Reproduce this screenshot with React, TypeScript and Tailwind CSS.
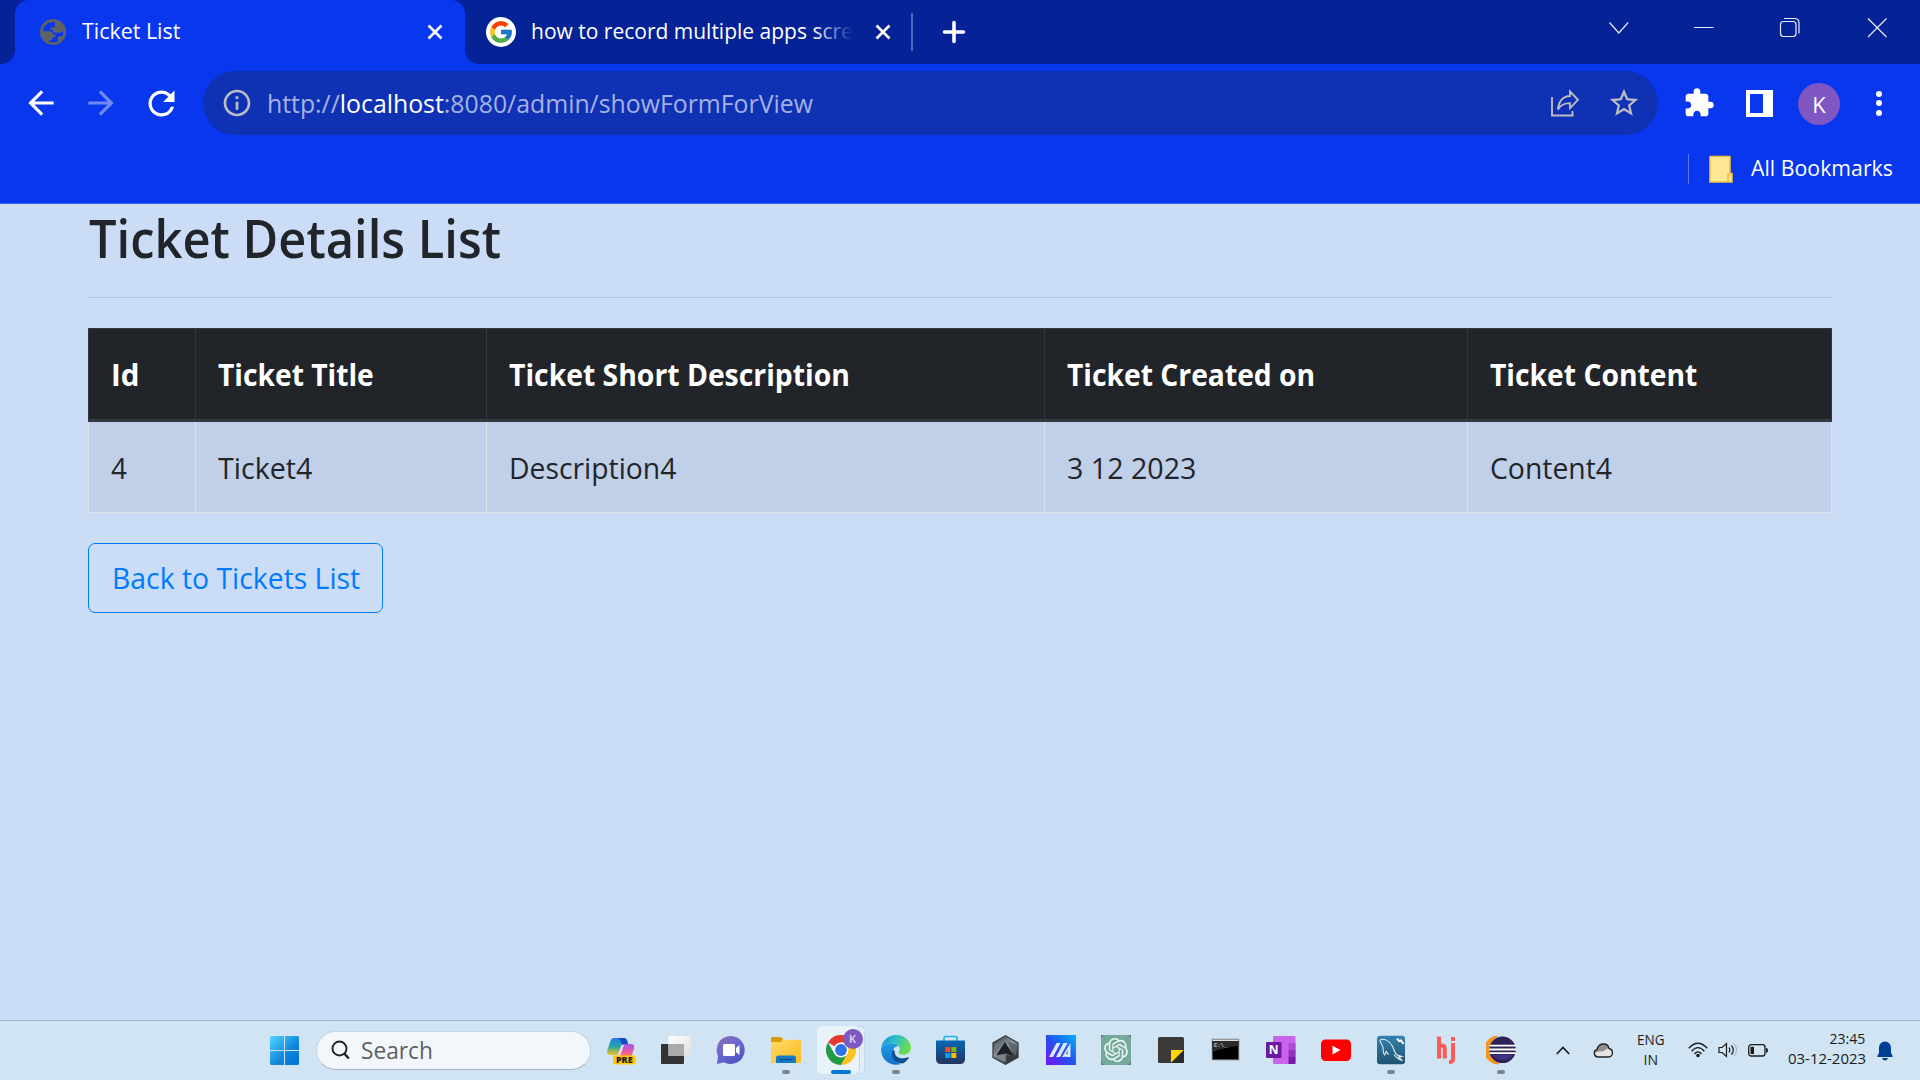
import React, { useLayoutEffect, useRef, useState } from "react";
import { MdArrowBack, MdArrowForward, MdRefresh, MdInfoOutline, MdStarBorder, MdExtension } from "react-icons/md";
import { FcGoogle } from "react-icons/fc";
import { SiOpenai } from "react-icons/si";

/** One line of text, condensed or stretched to fill the width its class gives. */
function Fit({ className, children }: { className: string; children: React.ReactNode }) {
  const outer = useRef<HTMLDivElement>(null);
  const inner = useRef<HTMLSpanElement>(null);
  const [scale, setScale] = useState(1);
  useLayoutEffect(() => {
    if (outer.current && inner.current) setScale(outer.current.clientWidth / inner.current.offsetWidth);
  }, []);
  return (
    <div ref={outer} className={"shrink-0 whitespace-nowrap " + className}>
      <span ref={inner} className="inline-block origin-left" style={{ transform: `scaleX(${scale})` }}>
        {children}
      </span>
    </div>
  );
}

function Close({ className }: { className: string }) {
  return (
    <svg viewBox="0 0 16 16" className={"h-4 w-4 shrink-0 " + className} stroke="white" strokeWidth="2.6" fill="none">
      <path d="M1.5 1.5l13 13M14.5 1.5l-13 13" />
    </svg>
  );
}

function TabStrip() {
  return (
    <div className="flex h-16 bg-[#0937ee]">
      <div className="w-[15px] rounded-br-[14px] bg-[#052296]" />
      <div className="w-[450px] bg-gradient-to-b from-[#052296] from-50% to-[#0937ee] to-50%">
        <div className="flex h-16 items-center rounded-t-[14px] bg-[#0937ee] pl-[25px]">
          <svg viewBox="0 0 26 26" className="h-[26px] w-[26px] shrink-0">
            <circle cx="13" cy="13" r="13" fill="#5f6368" />
            <path
              d="M15 3.200C9 2.200 3.500 6 2.700 12.200h6.800q3.600 0 3.600 3.300h2.300v3H12v2.500H9.500v1.800C13 24 16 23.500 18 22.300v-3.500q0-1.500 1.800-1.500h2.400q1.300-2.300 1.100-5.200-1.500 1.700-4 1.700h-3.500q-3-.2-3-3h-2.300V8.500h2.300q2.200 0 2.200-2.600z"
              fill="#0937ee"
            />
          </svg>
          <Fit className="mb-[3px] ml-[16px] w-[98px] font-['Open_Sans'] text-[22.5px] leading-8 text-white">Ticket List</Fit>
          <Close className="ml-[247px]" />
        </div>
      </div>
      <div className="flex flex-1 items-center rounded-bl-[14px] bg-[#052296] pl-[21px]">
        <div className="flex h-[30px] w-[30px] shrink-0 items-center justify-center rounded-full bg-white">
          <FcGoogle size={26} />
        </div>
        <div className="relative mb-[3px] ml-[15px] w-[322px] overflow-hidden">
          <Fit className="w-[322px] font-['Open_Sans'] text-[22.5px] leading-8 text-white">how to record multiple apps scre</Fit>
          <div className="absolute inset-y-0 right-0 w-10 bg-gradient-to-r from-[#05229600] to-[#052296]" />
        </div>
        <Close className="ml-[22px]" />
        <div className="ml-[20px] h-[38px] w-0.5 bg-[#5468b8]" />
        <svg viewBox="0 0 24 24" className="ml-[29px] h-6 w-6 shrink-0" stroke="white" strokeWidth="3.6" strokeLinecap="round">
          <path d="M12 2.500v19M2.500 12h19" />
        </svg>
        <svg viewBox="0 0 280 22" className="mb-[9px] ml-auto mr-[33px] h-[22px] w-[280px] shrink-0" fill="none" stroke="#e8ecff" strokeWidth="1.2">
          <path d="M2.500 5.500l9.300 10.500L21.200 5.500M87 10.500h19.500M261 1.500l18.500 18.500M279.500 1.500L261 20" />
          <rect x="173.500" y="4.500" width="15.500" height="15" rx="3" />
          <path d="M177 1.500h10.500q4.500 0 4.500 4.500v10.500" />
        </svg>
      </div>
    </div>
  );
}

function Toolbar() {
  return (
    <div className="flex h-[78px] items-center bg-[#0937ee] text-white">
      <MdArrowBack size={38} className="ml-[22px] shrink-0" />
      <MdArrowForward size={38} className="ml-[22px] shrink-0 text-[#7089f5]" />
      <MdRefresh size={39} className="ml-[22px] shrink-0" />
      <div className="ml-[22px] flex h-16 w-[1455px] shrink-0 items-center rounded-full bg-[#0f31b4] pl-[18px] text-[#bcbcc4]">
        <MdInfoOutline size={32} className="shrink-0" />
        <Fit className="mb-px ml-[14px] w-[546px] font-['Open_Sans'] text-[25px] leading-8 text-[#a5b1e3]">
          http://<span className="text-white">localhost</span>:8080/admin/showFormForView
        </Fit>
        <svg viewBox="0 0 30 28" className="ml-[737px] h-7 w-[30px] shrink-0" fill="none" stroke="currentColor" strokeWidth="1.9">
          <path d="M2 8v18.500h20.500V22M20 2.500l8 8.300-8 8.300v-5C14.500 14 10.500 16 8 20.500c.3-7.500 4.500-13.300 12-13.500z" />
        </svg>
        <MdStarBorder size={34} className="ml-[27px] shrink-0" />
      </div>
      <MdExtension size={32} className="ml-[25px] shrink-0" />
      <div className="ml-[31px] flex h-[27px] w-[27px] shrink-0 justify-start bg-white p-1">
        <div className="h-[19px] w-[13px] bg-[#0937ee]" />
      </div>
      <div className="ml-[25px] mt-0.5 flex h-[42px] w-[42px] shrink-0 items-center justify-center rounded-full bg-[#7e57c2] font-['Open_Sans'] text-[22px]">
        K
      </div>
      <div className="ml-[36px] flex flex-col gap-[3.5px]">
        <div className="h-1.5 w-1.5 rounded-full bg-white" />
        <div className="h-1.5 w-1.5 rounded-full bg-white" />
        <div className="h-1.5 w-1.5 rounded-full bg-white" />
      </div>
    </div>
  );
}

function Bookmarks() {
  return (
    <div className="flex h-[62px] items-center justify-end border-b border-[#3a5ff1] bg-[#0937ee] pb-[7px] pr-[27px]">
      <div className="h-[30px] w-px bg-[#5b79f4]" />
      <svg viewBox="0 0 24 28" className="ml-[20px] h-7 w-6">
        <path d="M1 1.500h20v17h2v8.500H1z" fill="#ffe793" stroke="#f4c63c" strokeWidth="1.5" />
        <path d="M19 27v-7.500h2.500" stroke="#e9b727" strokeWidth="1.3" fill="none" />
      </svg>
      <Fit className="mb-0.5 ml-[18px] w-[142px] font-['Open_Sans'] text-[22.5px] leading-8 text-white">All Bookmarks</Fit>
    </div>
  );
}

const columns = [
  { head: "Id", value: "4", col: "w-[107px]", hw: "w-[28px]", vw: "w-[16px]" },
  { head: "Ticket Title", value: "Ticket4", col: "w-[291px]", hw: "w-[156px]", vw: "w-[94px]" },
  { head: "Ticket Short Description", value: "Description4", col: "w-[558px]", hw: "w-[341px]", vw: "w-[167px]" },
  { head: "Ticket Created on", value: "3 12 2023", col: "w-[423px]", hw: "w-[248px]", vw: "w-[129px]" },
  { head: "Ticket Content", value: "Content4", col: "w-[365px]", hw: "w-[207px]", vw: "w-[122px]" },
];

function Page() {
  return (
    <div className="h-[816px] bg-[#cbdcf6] px-[88px] pt-[3px] font-['Open_Sans'] text-[#212529]">
      <Fit className="ml-px h-[90px] w-[412px] text-[52.5px] font-semibold leading-[62px]">Ticket Details List</Fit>
      <div className="mb-[30px] h-px bg-[#b2c3e1]" />
      <div className="w-[1744px]">
        <div className="flex h-[94px] border border-b-[3px] border-[#32383e] bg-[#212529] text-white">
          {columns.map((c) => (
            <div key={c.head} className={"flex shrink-0 items-center border-r border-[#32383e] pl-[22px] pt-0.5 last:shrink last:border-r-0 " + c.col}>
              <Fit className={"text-[29.5px] font-bold leading-[44px] " + c.hw}>{c.head}</Fit>
            </div>
          ))}
        </div>
        <div className="flex h-[91px] border border-t-0 border-[#dee2e6] bg-[#c1d0e9]">
          {columns.map((c) => (
            <div key={c.head} className={"flex shrink-0 items-center border-r border-[#dee2e6] pl-[22px] pt-0.5 last:shrink last:border-r-0 " + c.col}>
              <Fit className={"text-[29.5px] leading-[44px] " + c.vw}>{c.value}</Fit>
            </div>
          ))}
        </div>
      </div>
      <button className="mt-[30px] flex h-[70px] w-[295px] items-center rounded-[7px] border border-[#007bff] pl-[23px] text-left text-[#007bff]">
        <Fit className="w-[248px] text-[29.5px] leading-[44px]">Back to Tickets List</Fit>
      </button>
    </div>
  );
}

function Slot({ children, running }: { children: React.ReactNode; running?: boolean }) {
  return (
    <div className="relative flex h-full w-[55px] shrink-0 items-center justify-center pb-px">
      {children}
      {running && <div className="absolute bottom-[6px] h-1 w-2 rounded-full bg-[#7b868f]" />}
    </div>
  );
}

function AppIcons() {
  const s = "h-[30px] w-[30px]";
  return (
    <>
      <Slot>
        <svg viewBox="0 0 30 30" className={s}>
          <defs>
            <linearGradient id="cpA" x2="0" y2="1"><stop stopColor="#1b7ce0" /><stop offset=".5" stopColor="#2aa5a8" /><stop offset="1" stopColor="#f2c31b" /></linearGradient>
            <linearGradient id="cpB" x2="0" y2="1"><stop stopColor="#a35ae8" /><stop offset=".6" stopColor="#e75aa5" /><stop offset="1" stopColor="#f68b45" /></linearGradient>
          </defs>
          <path d="M8 3h11l-6 17H5c-3 0-4.500-2-3.600-5L4.500 6Q5.500 3 8 3z" fill="url(#cpA)" />
          <path d="M12 3h6q2.500 0 3.300 3l.9 3.500h-6L14.500 5z" fill="#1746c4" />
          <path d="M17 9h8q4 0 3 4l-2.500 9H12z" fill="url(#cpB)" />
          <path d="M15.500 10h2.500l-4 11h-2.500z" fill="#e9dcf5" />
          <rect x="7" y="20.5" width="22.5" height="9" rx="2" fill="#ffc60a" />
          <text x="18.300" y="28.300" textAnchor="middle" fontSize="9" fontWeight="800" fontFamily="Open Sans" fill="#222">PRE</text>
        </svg>
      </Slot>
      <Slot>
        <svg viewBox="0 0 30 30" className={s}>
          <defs><linearGradient id="tv" x2="1" y2="1"><stop stopColor="#fff" /><stop offset="1" stopColor="#dedede" /></linearGradient></defs>
          <rect y="9" width="23" height="20" rx="1" fill="#333" />
          <rect x="7.500" y="1" width="22.500" height="20" rx="1" fill="url(#tv)" />
          <path d="M7.500 9H23v12H7.500z" fill="#aaa" />
        </svg>
      </Slot>
      <Slot>
        <svg viewBox="0 0 30 30" className={s}>
          <defs><linearGradient id="ch" x1="0" x2=".7" y2="1"><stop stopColor="#8a6eae" /><stop offset=".5" stopColor="#6d68cf" /><stop offset="1" stopColor="#4d52c0" /></linearGradient></defs>
          <path d="M15 1a14 14 0 1 1-7 26.300L1 29l1-8A14 14 0 0 1 15 1z" fill="url(#ch)" />
          <rect x="7" y="9" width="12" height="12" rx="1.500" fill="#fff" />
          <path d="M20 13l3.500-3v10L20 17z" fill="#fff" />
        </svg>
      </Slot>
      <Slot running>
        <svg viewBox="0 0 30 30" className={s}>
          <defs><linearGradient id="fo" x2="1" y2="1"><stop stopColor="#ffda67" /><stop offset="1" stopColor="#fcbc22" /></linearGradient></defs>
          <path d="M0 3q0-1 1-1h9l3 3.500-3 3H0z" fill="#dc9b06" />
          <path d="M0 7h9.500l2.500-2.300h17q1 0 1 1V27q0 1-1 1H1q-1 0-1-1z" fill="url(#fo)" />
          <path d="M5 28v-5q0-2.500 2.500-2.500h15Q25 20.500 25 23v5z" fill="#1479c9" />
          <path d="M8.500 24.500h13" stroke="#0b4c88" strokeWidth="1.2" />
        </svg>
      </Slot>
      <div className="relative flex h-full w-[55px] shrink-0 items-center justify-center">
        <div className="absolute left-[3px] top-[5px] h-[48px] w-[48px] rounded-[5px] border border-[#c4dae9] bg-[#e2eff8]" />
        <div className="absolute left-[3px] top-[5px] h-[48px] w-[43px] rounded-[5px] border-r border-[#c4d7e6] bg-[#e9f3fa]" />
        <svg viewBox="0 0 30 30" className="relative mb-px h-[30px] w-[30px]">
          <path d="M15 15L2 7.500A15 15 0 0 1 28 7.500H15z" fill="#e33b2e" />
          <path d="M15 15L8.500 18.800 2 7.500A15 15 0 0 0 15 30l6.500-11.200z" fill="#249a48" />
          <path d="M15 7.500h13A15 15 0 0 1 15 30l6.500-11.200z" fill="#fcc31e" />
          <circle cx="15" cy="15" r="7.500" fill="#fff" />
          <circle cx="15" cy="15" r="5.900" fill="#2e74e6" />
        </svg>
        <div className="absolute left-[29px] top-[8px] flex h-[20px] w-[20px] items-center justify-center rounded-full bg-[#7e57c2] font-['Open_Sans'] text-[11px] font-semibold text-[#e4d9f3]">
          K
        </div>
        <div className="absolute bottom-[6px] left-[17px] h-1 w-5 rounded-full bg-[#0078d4]" />
      </div>
      <Slot running>
        <svg viewBox="0 0 30 30" className={s}>
          <defs>
            <linearGradient id="ed" x2="1" y2=".4"><stop stopColor="#1787d1" /><stop offset=".5" stopColor="#2fc0c8" /><stop offset="1" stopColor="#69dd4e" /></linearGradient>
            <linearGradient id="eb" x2="0" y2="1"><stop stopColor="#1d9ce4" /><stop offset="1" stopColor="#1272cf" /></linearGradient>
          </defs>
          <path d="M.3 12C1.700 5 7.500 0 15 0c9 0 15 6.500 15 12.500 0 5-4 7.300-7.500 7.300-3.300 0-5-1.200-5-2.200 0-.8 1.300-1.500 1.300-3.600 0-3-3-5.700-7.300-5.700C6 8.300 2 10 .3 12z" fill="url(#ed)" />
          <path d="M.2 13C2 9.500 6.500 8.300 11 8.300c3 0 5.600 1.200 6.800 3-3.500-.3-6.300 2.500-6.300 6.700 0 5.500 4.200 9.700 8.800 11C9 32.500-1 24 .2 13z" fill="url(#eb)" />
          <path d="M12 14.500c-3 5 0 14 9.500 14 3-1.300 5-3.300 6.300-5.500.3-.7-.2-1-.8-.7-6 2.500-14 .5-13.300-6.300z" fill="#114f93" />
        </svg>
      </Slot>
      <Slot>
        <svg viewBox="0 0 30 30" className={s}>
          <defs><linearGradient id="st" x2="0" y2="1"><stop stopColor="#0866b4" /><stop offset="1" stopColor="#23355f" /></linearGradient></defs>
          <path d="M8 6V3q0-1.500 1.500-1.500h10Q21 1.500 21 3v3" fill="none" stroke="#21b3ee" strokeWidth="1.7" />
          <path d="M0 5.500h29V24q0 5-5 5H5q-5 0-5-5z" fill="url(#st)" />
          <path d="M9.300 12h5v5h-5z" fill="#f25022" /><path d="M15.300 12h5v5h-5z" fill="#7fba00" />
          <path d="M9.300 18h5v5h-5z" fill="#00a4ef" /><path d="M15.300 18h5v5h-5z" fill="#ffb900" />
        </svg>
      </Slot>
      <Slot>
        <svg viewBox="0 0 30 30" className={s}>
          <defs><linearGradient id="hx" x2=".7" y2="1"><stop stopColor="#30363b" /><stop offset=".5" stopColor="#8e969c" /><stop offset="1" stopColor="#202428" /></linearGradient></defs>
          <path d="M14.500 .8L27 8v14.300l-12.500 7L2 22.300V8z" fill="url(#hx)" stroke="#3a4045" strokeWidth="1.3" />
          <path d="M14 7l8.500 14L14.500 18.500 5 20.500z" fill="#1d2124" />
          <path d="M13 5.500L4 19V9.500z" fill="#6d767c" />
          <path d="M4 21.500l10.500-2v8z" fill="#7b8389" /><path d="M16 6l9 4v11z" fill="#5e666c" />
          <path d="M15.500 20l8 2.500-8 4.800z" fill="#34393e" />
        </svg>
      </Slot>
      <Slot>
        <svg viewBox="0 0 30 30" className={s}>
          <defs><linearGradient id="ma" x1="1" x2="0" y2="1"><stop stopColor="#00b4ff" /><stop offset=".5" stopColor="#2352ee" /><stop offset="1" stopColor="#7713f5" /></linearGradient></defs>
          <path d="M0 0h30v30H0z" fill="url(#ma)" />
          <path d="M3 22l7.500-14h4L7 22zM10 22l7.500-14h4L14 22z" fill="#dfe7ff" />
          <path d="M16 22l8.500-14V22h-2.800v-6.500L18.500 22z" fill="#dfe7ff" />
          <circle cx="20.500" cy="20.500" r="1.500" fill="#fff" />
        </svg>
      </Slot>
      <Slot>
        <div className="flex h-[30px] w-[30px] items-center justify-center bg-[#6b7f7a]">
          <div className="flex h-[30px] w-[30px] items-center justify-center rounded-[5px] bg-[#74aa9c] text-[#eef6f3]">
            <SiOpenai size={24} />
          </div>
        </div>
      </Slot>
      <Slot>
        <svg viewBox="0 0 30 30" className={s}>
          <rect x="2" y="2" width="26" height="26" rx="1.500" fill="#3b3a39" />
          <path d="M15 15h13L15 28z" fill="#ffd500" /><path d="M28 15v11.500q0 1.500-1.500 1.500H15z" fill="#2b2a29" />
        </svg>
      </Slot>
      <Slot>
        <svg viewBox="0 0 30 30" className={s}>
          <rect x="1" y="4" width="27" height="21" fill="#000" stroke="#a6a9ab" />
          <path d="M1.500 4.500h26V6h-26z" fill="#ddd" /><path d="M1.500 6h26v5Q14 12 1.500 17z" fill="#2c2c2c" />
          <text x="3" y="11.500" fontSize="5.500" fontFamily="Liberation Mono" fontWeight="700" fill="#ddd">C:\_</text>
        </svg>
      </Slot>
      <Slot>
        <svg viewBox="0 0 30 30" className={s}>
          <rect x="7" y="1" width="22.500" height="28" rx="1" fill="#ca64ea" />
          <path d="M22.500 8h7v7h-7z" fill="#ae4bd5" /><path d="M22.500 15h7v7h-7z" fill="#9332bf" /><path d="M22.500 22h7v6q0 1-1 1h-6z" fill="#7719aa" />
          <rect x="0" y="7" width="15.500" height="16" rx="1" fill="#6b1aa6" />
          <text x="7.700" y="19.300" textAnchor="middle" fontSize="12" fontWeight="700" fontFamily="Open Sans" fill="#fff">N</text>
        </svg>
      </Slot>
      <Slot>
        <svg viewBox="0 0 30 30" className={s}>
          <rect y="4.500" width="30" height="21.500" rx="4.500" fill="#f00" /><path d="M11.500 10.700v8.800l8-4.400z" fill="#fff" />
        </svg>
      </Slot>
      <Slot running>
        <svg viewBox="0 0 30 30" className={s}>
          <defs><linearGradient id="my" x2="0" y2="1"><stop stopColor="#3681ae" /><stop offset="1" stopColor="#1e536f" /></linearGradient></defs>
          <rect x="1" y=".8" width="28" height="28.500" rx="3" fill="url(#my)" />
          <path d="M4 5c4-2 9 .5 12 5.500 2 3.500 2.500 7 4.500 9 1.500 1.300 4 1.500 5.500 2-1.500.3-2.500.5-3.500.5 1 1 2.500 2 3.500 3.500-3-1-6.500-3.500-8-6M4 5c0 3 2.500 4.500 3 7.500.3 3-.2 5.500 1.500 7.500 1-1 1-2.500 1.500-3.500 1 .5 1.500 2 2.500 3" fill="none" stroke="#dcebf2" strokeWidth="1.1" />
          <path d="M21 3.500l2 2.500 2-.5 2.500 3.500" stroke="#fff" strokeWidth="2" fill="none" />
        </svg>
      </Slot>
      <Slot>
        <svg viewBox="0 0 30 30" className={s} fill="none" stroke="#ff5a5a" strokeWidth="4">
          <path d="M8 1.500v22M8 14q0-3.500 3-3.500 2.800 0 2.800 3.500v9.500M22 8v16.500q0 2.500-4 2.500M22 2v4" />
        </svg>
      </Slot>
      <Slot running>
        <svg viewBox="0 0 30 30" className={s}>
          <path d="M11.500 1A14 14 0 0 0 13 29Q4 24 4.500 14 5 5 11.500 1z" fill="#f7941e" stroke="#f7941e" />
          <circle cx="16.500" cy="14.800" r="13.300" fill="#2c2255" />
          <path d="M6 20a13.300 13.300 0 0 0 21 0z" fill="#3f3283" />
          <path d="M3.500 10.700H29.500M3 14.500H30M3.500 18.200H29.500" stroke="#fff" strokeWidth="1.8" />
        </svg>
      </Slot>
    </>
  );
}

function Tray() {
  return (
    <div className="flex items-center font-['Open_Sans'] text-[#1b1b1b]">
      <svg viewBox="0 0 14 9" className="ml-[27px] h-[9px] w-[14px] shrink-0" fill="none" stroke="currentColor" strokeWidth="1.7"><path d="M.8 8L7 1.500 13.200 8" /></svg>
      <svg viewBox="0 0 20 15" className="ml-[23px] h-[15px] w-5 shrink-0">
        <path d="M4.500 14A4 4 0 0 1 4 6.300C5 2.800 8 1 10.500 1c2.700 0 5 1.800 5.500 4.500A4.300 4.300 0 0 1 15.500 14z" fill="#e3e3e3" />
        <path d="M1 10.500C1 8 2.500 6.500 4.300 6.300 5 3 8 1.600 10.500 1.600c2.300 0 4.700 1.600 5.200 4-3.500.3-4 3-7 2.800-2.700-.3-5 .5-7.700 2.100z" fill="#8f8f8f" />
        <path d="M4.500 14A4 4 0 0 1 4 6.300C5 2.800 8 1 10.500 1c2.700 0 5 1.800 5.500 4.500A4.300 4.300 0 0 1 15.500 14z" fill="none" stroke="#222" strokeWidth="1.3" />
      </svg>
      <div className="mb-0.5 ml-[24px] flex w-[28px] flex-col items-center text-[14px] leading-[20px]">
        <Fit className="w-[28px]">ENG</Fit>
        <Fit className="w-[14px]">IN</Fit>
      </div>
      <svg viewBox="0 0 20 16" className="mb-px ml-[23px] h-4 w-5 shrink-0" fill="none" stroke="currentColor" strokeWidth="1.3">
        <path d="M.7 6.300Q10-3.800 19.300 6.300M3.600 9.200Q10 2 16.400 9.200M6.500 12Q10 7.700 13.500 12" /><circle cx="10" cy="13.500" r="1.800" fill="currentColor" stroke="none" />
      </svg>
      <svg viewBox="0 0 20 16" className="mb-px ml-[10px] h-4 w-5 shrink-0" fill="none" stroke="currentColor" strokeWidth="1.2">
        <path d="M1 5.500h3L8.500 1.500v13L4 10.500H1zM11 5.500q1.700 2.500 0 5M13.500 3.300q3.500 4.700 0 9.400" /><path d="M16 1.500q5 6.500 0 13" stroke="#a9b7c1" />
      </svg>
      <svg viewBox="0 0 20 13" className="ml-[10px] h-[13px] w-5 shrink-0">
        <rect x=".7" y=".7" width="16.300" height="11.300" rx="2.500" fill="none" stroke="#1b1b1b" strokeWidth="1.3" />
        <rect x="2.500" y="2.800" width="3.500" height="7.200" fill="#1b1b1b" /><path d="M18 4q2 0 2 2.400T18 8.700z" fill="#1b1b1b" />
      </svg>
      <div className="mb-[3px] ml-[20px] flex w-[78px] flex-col items-end text-[14px] leading-[20px]">
        <Fit className="w-[36px]">23:45</Fit>
        <Fit className="w-[78px]">03-12-2023</Fit>
      </div>
      <svg viewBox="0 0 16 20" className="ml-[11px] h-5 w-4 shrink-0" fill="#003e92">
        <path d="M8 .5a6 6 0 0 1 6 6v5.500l1.700 3q.3 1-.7 1H1q-1 0-.7-1L2 12V6.500A6 6 0 0 1 8 .5zM5 17h6q-.8 2.500-3 2.500T5 17z" />
      </svg>
    </div>
  );
}

function Taskbar() {
  return (
    <div className="flex h-[60px] items-center border-t border-[#a9b7cd] bg-[#d0e4f3] pl-[270px]">
      <svg viewBox="0 0 29 29" className="h-[29px] w-[29px] shrink-0">
        <defs><linearGradient id="win" gradientUnits="userSpaceOnUse" x1="0" y1="0" x2="29" y2="29"><stop stopColor="#4fd5ff" /><stop offset=".6" stopColor="#1085dc" /><stop offset="1" stopColor="#0072d0" /></linearGradient></defs>
        <path d="M1 0h13v14H0V1zM15 0h13l1 1v13H15zM0 15h14v14H1l-1-1zM15 15h14v13l-1 1H15z" fill="url(#win)" />
      </svg>
      <div className="mb-px ml-[17px] flex h-[39px] w-[275px] shrink-0 items-center rounded-full border border-[#c3d6e5] border-b-[#a5b7c6] bg-[#f2f7fc] pl-[14px]">
        <svg viewBox="0 0 19 20" className="h-5 w-[19px] shrink-0" fill="none" stroke="#222" strokeWidth="1.9"><circle cx="8.500" cy="8.500" r="7" /><path d="M13.300 13.500l4.500 5" strokeWidth="2.5" /></svg>
        <Fit className="ml-[11px] w-[72px] font-['Open_Sans'] text-[23px] leading-8 text-[#5e6062]">Search</Fit>
      </div>
      <div className="ml-[2.5px] flex h-full shrink-0"><AppIcons /></div>
      <Tray />
    </div>
  );
}

export default function App() {
  return (
    <div className="h-[1080px] w-[1920px] overflow-hidden">
      <TabStrip />
      <Toolbar />
      <Bookmarks />
      <Page />
      <Taskbar />
    </div>
  );
}
